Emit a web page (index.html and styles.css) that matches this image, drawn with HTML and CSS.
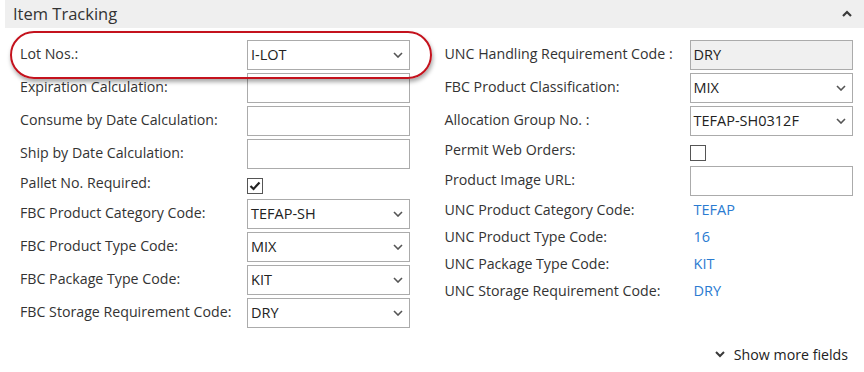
FILE: index.html
```html
<!DOCTYPE html>
<html>
<head>
<meta charset="utf-8">
<link rel="stylesheet" href="styles.css">
</head>
<body>
<section class="panel">
  <header class="panel-head">
    <span class="panel-title">Item Tracking</span>
    <svg class="collapse" width="10" height="7" viewBox="0 0 10 7"><path d="M1 6 L5 2 L9 6" fill="none" stroke="#3a3a3a" stroke-width="2.2"/></svg>
  </header>
  <div class="panel-body">
    <div class="col">
      <div class="row"><span class="lbl">Lot Nos.:</span><div class="field sel"><span>I-LOT</span><svg class="dd" width="10" height="6" viewBox="0 0 10 6"><path d="M1 1 L5 5 L9 1" fill="none" stroke="#555" stroke-width="1.6"/></svg></div></div>
      <div class="row"><span class="lbl">Expiration Calculation:</span><div class="field"></div></div>
      <div class="row"><span class="lbl">Consume by Date Calculation:</span><div class="field"></div></div>
      <div class="row"><span class="lbl">Ship by Date Calculation:</span><div class="field"></div></div>
      <div class="row short"><span class="lbl">Pallet No. Required:</span><span class="chk on"><svg width="12" height="10" viewBox="0 0 12 10"><path d="M1.5 5 L4.5 8 L10.5 1.5" fill="none" stroke="#222" stroke-width="2.2"/></svg></span></div>
      <div class="row"><span class="lbl">FBC Product Category Code:</span><div class="field sel"><span>TEFAP-SH</span><svg class="dd" width="10" height="6" viewBox="0 0 10 6"><path d="M1 1 L5 5 L9 1" fill="none" stroke="#555" stroke-width="1.6"/></svg></div></div>
      <div class="row"><span class="lbl">FBC Product Type Code:</span><div class="field sel"><span>MIX</span><svg class="dd" width="10" height="6" viewBox="0 0 10 6"><path d="M1 1 L5 5 L9 1" fill="none" stroke="#555" stroke-width="1.6"/></svg></div></div>
      <div class="row"><span class="lbl">FBC Package Type Code:</span><div class="field sel"><span>KIT</span><svg class="dd" width="10" height="6" viewBox="0 0 10 6"><path d="M1 1 L5 5 L9 1" fill="none" stroke="#555" stroke-width="1.6"/></svg></div></div>
      <div class="row"><span class="lbl">FBC Storage Requirement Code:</span><div class="field sel"><span>DRY</span><svg class="dd" width="10" height="6" viewBox="0 0 10 6"><path d="M1 1 L5 5 L9 1" fill="none" stroke="#555" stroke-width="1.6"/></svg></div></div>
    </div>
    <div class="col right">
      <div class="row"><span class="lbl">UNC Handling Requirement Code :</span><div class="field ro"><span>DRY</span></div></div>
      <div class="row"><span class="lbl">FBC Product Classification:</span><div class="field sel"><span>MIX</span><svg class="dd" width="10" height="6" viewBox="0 0 10 6"><path d="M1 1 L5 5 L9 1" fill="none" stroke="#555" stroke-width="1.6"/></svg></div></div>
      <div class="row"><span class="lbl">Allocation Group No. :</span><div class="field sel"><span>TEFAP-SH0312F</span><svg class="dd" width="10" height="6" viewBox="0 0 10 6"><path d="M1 1 L5 5 L9 1" fill="none" stroke="#555" stroke-width="1.6"/></svg></div></div>
      <div class="row short"><span class="lbl">Permit Web Orders:</span><span class="chk"></span></div>
      <div class="row"><span class="lbl">Product Image URL:</span><div class="field"></div></div>
      <div class="row short"><span class="lbl">UNC Product Category Code:</span><span class="val">TEFAP</span></div>
      <div class="row short"><span class="lbl">UNC Product Type Code:</span><span class="val">16</span></div>
      <div class="row short"><span class="lbl">UNC Package Type Code:</span><span class="val">KIT</span></div>
      <div class="row short"><span class="lbl">UNC Storage Requirement Code:</span><span class="val">DRY</span></div>
    </div>
    <div class="highlight"></div>
  </div>
  <div class="more">
    <svg width="10" height="7" viewBox="0 0 10 7"><path d="M1 1 L5 5 L9 1" fill="none" stroke="#3a3a3a" stroke-width="2"/></svg>
    <span>Show more fields</span>
  </div>
</section>
</body>
</html>
```
FILE: styles.css
```css
html, body {
  margin: 0;
  padding: 0;
  background: #fff;
}
body {
  font-family: "Open Sans", "Noto Sans", sans-serif;
  font-size: 14.2px;
  color: #333;
  width: 864px;
  height: 372px;
  overflow: hidden;
}
.panel {
  margin-left: 5px;
}
.panel-head {
  height: 28px;
  background: #efefef;
  display: flex;
  align-items: center;
  justify-content: space-between;
  padding: 0 12px 0 8px;
}
.panel-title {
  font-size: 16.5px;
  color: #333;
  padding-bottom: 2px;
}
.collapse {
  margin-top: -1px;
}
.panel-body {
  position: relative;
  display: flex;
  padding: 12px 0 0 15px;
}
.col {
  display: flex;
  flex-direction: column;
  gap: 3px;
  width: 425px;
}
.col.right {
  width: 420px;
}
.row {
  display: flex;
  align-items: center;
  height: 30px;
}
.row.short {
  height: 24px;
}
.lbl {
  width: 227px;
  flex: none;
  white-space: nowrap;
  padding-bottom: 3px;
}
.right .lbl {
  width: 245px;
}
.field {
  box-sizing: border-box;
  width: 163px;
  height: 30px;
  border: 1px solid #ababab;
  background: #fff;
  display: flex;
  align-items: center;
  justify-content: space-between;
  padding: 0 6px 0 3px;
  color: #222;
  font-size: 14.5px;
}
.field > span {
  padding-bottom: 2px;
}
.field.ro {
  background: #f0f0f0;
}
.dd {
  flex: none;
}
.chk {
  box-sizing: border-box;
  width: 16px;
  height: 16px;
  border: 1px solid #555;
  background: #fff;
  display: flex;
  align-items: center;
  justify-content: center;
  margin-top: 3px;
}
.val {
  color: #2a7bd1;
  padding: 0 0 3px 4px;
  font-size: 14.5px;
}
.highlight {
  position: absolute;
  left: 5px;
  top: 3px;
  width: 418px;
  height: 44px;
  border: 2px solid #c4121d;
  border-radius: 24px;
  box-shadow: 1px 3px 4px rgba(0, 0, 0, 0.35);
  pointer-events: none;
}
.more {
  display: flex;
  justify-content: flex-end;
  align-items: center;
  gap: 9px;
  padding: 17px 16px 0 0;
  color: #222;
  font-size: 14.2px;
}
```
